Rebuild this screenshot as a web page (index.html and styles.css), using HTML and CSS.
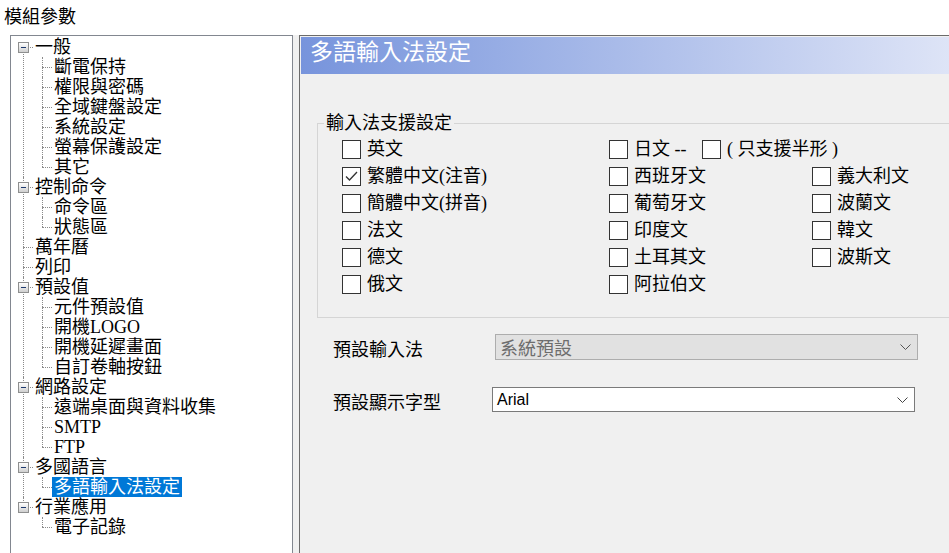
FILE: index.html
```html
<!DOCTYPE html>
<html lang="zh-Hant">
<head>
  <meta charset="UTF-8">
  <meta name="viewport" content="width=device-width, initial-scale=1.0">
  <title>模組參數</title>
  <link rel="stylesheet" href="styles.css">
</head>
<body>
  <div class="title">模組參數</div>

  <div class="main">
    <!-- module tree -->
    <div class="tree-box">
      <ul class="tree">
        <li>
          <div class="row"><span class="toggle"></span><span class="label">一般</span></div>
          <ul>
            <li><div class="row"><span class="label">斷電保持</span></div></li>
            <li><div class="row"><span class="label">權限與密碼</span></div></li>
            <li><div class="row"><span class="label">全域鍵盤設定</span></div></li>
            <li><div class="row"><span class="label">系統設定</span></div></li>
            <li><div class="row"><span class="label">螢幕保護設定</span></div></li>
            <li><div class="row"><span class="label">其它</span></div></li>
          </ul>
        </li>
        <li>
          <div class="row"><span class="toggle"></span><span class="label">控制命令</span></div>
          <ul>
            <li><div class="row"><span class="label">命令區</span></div></li>
            <li><div class="row"><span class="label">狀態區</span></div></li>
          </ul>
        </li>
        <li><div class="row"><span class="label">萬年曆</span></div></li>
        <li><div class="row"><span class="label">列印</span></div></li>
        <li>
          <div class="row"><span class="toggle"></span><span class="label">預設值</span></div>
          <ul>
            <li><div class="row"><span class="label">元件預設值</span></div></li>
            <li><div class="row"><span class="label">開機LOGO</span></div></li>
            <li><div class="row"><span class="label">開機延遲畫面</span></div></li>
            <li><div class="row"><span class="label">自訂卷軸按鈕</span></div></li>
          </ul>
        </li>
        <li>
          <div class="row"><span class="toggle"></span><span class="label">網路設定</span></div>
          <ul>
            <li><div class="row"><span class="label">遠端桌面與資料收集</span></div></li>
            <li><div class="row"><span class="label">SMTP</span></div></li>
            <li><div class="row"><span class="label">FTP</span></div></li>
          </ul>
        </li>
        <li>
          <div class="row"><span class="toggle"></span><span class="label">多國語言</span></div>
          <ul>
            <li><div class="row"><span class="label selected">多語輸入法設定</span></div></li>
          </ul>
        </li>
        <li>
          <div class="row"><span class="toggle"></span><span class="label">行業應用</span></div>
          <ul>
            <li><div class="row"><span class="label">電子記錄</span></div></li>
          </ul>
        </li>
      </ul>
    </div>

    <!-- settings page -->
    <div class="settings">
      <div class="panel">
        <div class="panel-header">多語輸入法設定</div>

        <fieldset class="group">
          <legend>輸入法支援設定</legend>
          <div class="lang-grid">
            <label class="check"><span class="box"></span>英文</label>
            <div class="check-pair">
              <label class="check jp"><span class="box"></span>日文 --</label>
              <label class="check"><span class="box"></span>( 只支援半形 )</label>
            </div>
            <div></div>

            <label class="check"><span class="box"><svg width="17" height="17" viewBox="0 0 17 17"><polyline points="3,8.5 6.5,12 14,4" /></svg></span>繁體中文(注音)</label>
            <label class="check"><span class="box"></span>西班牙文</label>
            <label class="check"><span class="box"></span>義大利文</label>

            <label class="check"><span class="box"></span>簡體中文(拼音)</label>
            <label class="check"><span class="box"></span>葡萄牙文</label>
            <label class="check"><span class="box"></span>波蘭文</label>

            <label class="check"><span class="box"></span>法文</label>
            <label class="check"><span class="box"></span>印度文</label>
            <label class="check"><span class="box"></span>韓文</label>

            <label class="check"><span class="box"></span>德文</label>
            <label class="check"><span class="box"></span>土耳其文</label>
            <label class="check"><span class="box"></span>波斯文</label>

            <label class="check"><span class="box"></span>俄文</label>
            <label class="check"><span class="box"></span>阿拉伯文</label>
            <div></div>
          </div>
        </fieldset>

        <div class="field first">
          <span class="field-label">預設輸入法</span>
          <div class="select disabled">
            <span>系統預設</span>
            <svg class="chevron" width="11" height="6" viewBox="0 0 11 6"><polyline points="0.5,0.5 5.5,5.5 10.5,0.5" /></svg>
          </div>
        </div>

        <div class="field second">
          <span class="field-label">預設顯示字型</span>
          <div class="select">
            <span class="font-name">Arial</span>
            <svg class="chevron" width="11" height="6" viewBox="0 0 11 6"><polyline points="0.5,0.5 5.5,5.5 10.5,0.5" /></svg>
          </div>
        </div>
      </div>
    </div>
  </div>
</body>
</html>
```

FILE: styles.css
```css
* {
  box-sizing: border-box;
}
body {
  margin: 0;
  width: 949px;
  height: 553px;
  overflow: hidden;
  font-family: "Liberation Serif", "Noto Sans CJK TC", serif;
  font-size: 18px;
  color: #000;
  background-color: #fff;
}
.title {
  height: 35px;
  padding: 7px 0 0 4px;
  line-height: 20px;
}
.main {
  display: flex;
  height: 540px;
  padding-left: 10px;
}

/* tree */
.tree-box {
  flex: none;
  width: 283px;
  padding-top: 1px;
  border: 1px solid #828790;
  background-color: #fff;
}
.tree,
.tree ul {
  list-style: none;
  margin: 0;
  padding: 0;
}
.tree li {
  position: relative;
}
.row {
  height: 20px;
  line-height: 20px;
  white-space: nowrap;
}
.tree > li > .row {
  padding-left: 22px;
}
.tree li li > .row {
  padding-left: 41px;
}
.label {
  display: inline-block;
  height: 20px;
  padding: 0 2px;
}
.label.selected {
  background-color: #0078d7;
  color: #fff;
}
.tree li::before {
  content: '';
  position: absolute;
  left: 12px;
  top: 10px;
  width: 10px;
  border-top: 1px dotted #8a8a8a;
}
.tree li::after {
  content: '';
  position: absolute;
  left: 12px;
  top: 0;
  bottom: 0;
  border-left: 1px dotted #8a8a8a;
}
.tree > li:first-child::after {
  top: 10px;
}
.tree li li::before,
.tree li li::after {
  left: 31px;
}
.tree li:last-child::after {
  bottom: auto;
  height: 10px;
}
.toggle {
  position: absolute;
  z-index: 1;
  left: 7px;
  top: 5px;
  width: 11px;
  height: 11px;
  border: 1px solid #8e8f8f;
  background: linear-gradient(#fff, #cfcfcf);
}
.toggle::before {
  content: '';
  position: absolute;
  left: 2px;
  top: 4px;
  width: 5px;
  height: 1px;
  background-color: #1e3a6e;
}

/* settings page */
.settings {
  flex: none;
  padding-left: 6px;
  background-color: #f0f0f0;
}
.panel {
  width: 660px;
  height: 100%;
  padding: 1px;
  border: 1px solid #6b6b6b;
  background-color: #f0f0f0;
}
.panel-header {
  height: 37px;
  padding-left: 9px;
  font-size: 23px;
  line-height: 32px;
  color: #fff;
  background: linear-gradient(to right, #7794dc, #dfe5f7);
}
.group {
  width: 650px;
  min-width: 0;
  margin: 39px 0 0 16px;
  padding: 7px 0 15px 0;
  border: 1px solid #d5d5d5;
}
.group legend {
  margin-left: 6px;
  padding: 0 2px;
  line-height: 20px;
}
.lang-grid {
  display: grid;
  grid-template-columns: 267px 203px 150px;
  grid-auto-rows: 27px;
  padding-left: 24px;
}
.check {
  display: flex;
  align-items: flex-start;
  gap: 6px;
  height: 19px;
  line-height: 19px;
  white-space: nowrap;
}
.check-pair {
  display: flex;
}
.check.jp {
  flex: none;
  width: 93px;
}
.box {
  flex: none;
  width: 19px;
  height: 19px;
  border: 1px solid #333;
  background-color: #fff;
}
.box svg {
  display: block;
  fill: none;
  stroke: #333;
  stroke-width: 1.3;
}

/* dropdowns */
.field {
  display: flex;
  align-items: center;
  margin-left: 32px;
}
.field.first {
  margin-top: 15px;
}
.field.second {
  margin-top: 26px;
}
.field-label {
  width: 162px;
  padding-top: 7px;
  line-height: 20px;
}
.select {
  display: flex;
  align-items: center;
  justify-content: space-between;
  width: 423px;
  height: 25px;
  padding: 0 6px 0 4px;
  border: 1px solid #7a7a7a;
  background-color: #fff;
}
.select.disabled {
  height: 26px;
  border-color: #adadad;
  background-color: #e1e1e1;
  color: #6d6d6d;
}
.select.disabled .chevron {
  stroke: #555;
}
.field.second .select {
  margin-left: -3px;
}
.font-name {
  font-family: "Liberation Sans", sans-serif;
  font-size: 16px;
}
.chevron {
  fill: none;
  stroke: #444;
  stroke-width: 1;
}
```
